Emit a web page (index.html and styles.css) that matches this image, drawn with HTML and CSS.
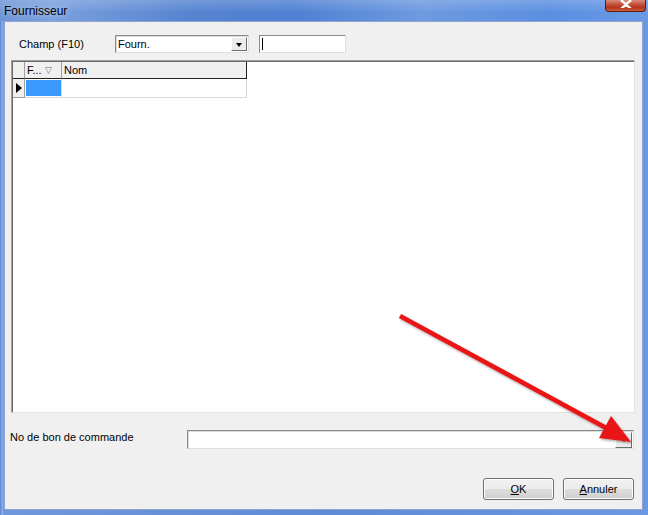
FILE: index.html
```html
<!DOCTYPE html>
<html>
<head>
<meta charset="utf-8">
<link rel="stylesheet" href="styles.css">
</head>
<body>
<div class="window">
  <div class="titlebar">
    <span class="title">Fournisseur</span>
    <span class="close"><svg width="14" height="8" viewBox="0 0 14 8"><path d="M2 0 L7 4.5 L12 0 M2 9 L7 4.5 L12 9" stroke="#fff" stroke-width="2.4" fill="none"/></svg></span>
  </div>
  <div class="client">
    <div class="toprow">
      <span class="lbl champ">Champ (F10)</span>
      <div class="combo">
        <span class="combo-text">Fourn.</span>
        <span class="dd"><i class="tri"></i></span>
      </div>
      <div class="field"><span class="caret"></span></div>
    </div>
    <div class="grid">
      <div class="ghead">
        <div class="gc sel"></div>
        <div class="gc c1">F... <span class="sort">&#9661;</span></div>
        <div class="gc c2">Nom</div>
      </div>
      <div class="grow">
        <div class="gc sel"><i class="rtri"></i></div>
        <div class="gc c1"><span class="hl"></span></div>
        <div class="gc c2"></div>
      </div>
    </div>
    <div class="bottomrow">
      <span class="lbl po">No de bon de commande</span>
      <div class="combo wide">
        <span class="combo-text"></span>
        <span class="dd"><i class="tri"></i></span>
      </div>
    </div>
    <div class="buttons">
      <button class="btn"><u>O</u>K</button>
      <button class="btn"><u>A</u>nnuler</button>
    </div>
  </div>
  <svg class="arrow" width="648" height="515" viewBox="0 0 648 515">
    <defs>
      <filter id="sh" x="-10%" y="-10%" width="120%" height="120%">
        <feDropShadow dx="1" dy="1.5" stdDeviation="1.2" flood-color="#000" flood-opacity="0.35"/>
      </filter>
    </defs>
    <g filter="url(#sh)">
      <line x1="400" y1="316" x2="608" y2="429" stroke="#e81212" stroke-width="4.5"/>
      <polygon points="631,442 599,438 611,416" fill="#e81212"/>
    </g>
  </svg>
</div>
</body>
</html>
```
FILE: styles.css
```css
html, body {
  margin: 0;
  padding: 0;
}
body {
  width: 648px;
  height: 515px;
  overflow: hidden;
  font-family: "Liberation Sans", Arial, sans-serif;
  font-size: 11px;
  color: #000;
}
.window {
  position: relative;
  width: 648px;
  height: 515px;
  box-sizing: border-box;
  display: flex;
  flex-direction: column;
  background: linear-gradient(to right, #4f7fd0 0px, #8fb0ea 2px, #6f97dc 4px, #5f8ad6 50%, #6a98e2 100%);
}
.titlebar {
  height: 21px;
  display: flex;
  justify-content: space-between;
  align-items: flex-start;
  background:
    linear-gradient(to bottom, rgba(255,255,255,0.18), rgba(255,255,255,0) 60%),
    linear-gradient(to right, #6c94d6 0%, #7aa0de 8%, #5583d0 30%, #4f80d2 45%, #6d9ae0 65%, #5b8fe0 85%, #6a9ae6 100%);
}
.title {
  font-family: "Liberation Sans", Arial, sans-serif;
  font-size: 12px;
  padding: 4px 0 0 4px;
  color: #000;
  text-shadow: 0 0 6px rgba(255,255,255,0.7);
}
.close {
  width: 41px;
  height: 12px;
  margin-right: 2px;
  box-sizing: border-box;
  border: 1px solid #5a1b12;
  border-top: none;
  border-radius: 0 0 4px 4px;
  background: linear-gradient(to bottom, #d98a7c 0%, #c5503c 40%, #b23418 70%, #d0603c 100%);
  display: flex;
  justify-content: center;
  align-items: flex-start;
}
.close svg {
  display: block;
}
.client {
  flex: 1;
  margin: 0 5px 5px 4px;
  background: #f0f0f0;
  border: 1px solid #8ea6cf;
  box-sizing: border-box;
  display: flex;
  flex-direction: column;
}
.toprow {
  display: flex;
  align-items: center;
  margin-top: 13px;
  padding-left: 14px;
  height: 18px;
}
.lbl {
  white-space: nowrap;
}
.champ {
  width: 96px;
  flex: none;
}
.combo {
  width: 134px;
  height: 18px;
  box-sizing: border-box;
  background: #fff;
  border-top: 1px solid #8a8a8a;
  border-left: 1px solid #8a8a8a;
  border-right: 1px solid #e0e0e0;
  border-bottom: 1px solid #e0e0e0;
  box-shadow: inset 1px 1px 0 #dcdcdc;
  display: flex;
  align-items: center;
  padding: 0 1px 0 2px;
}
.combo-text {
  flex: 1;
  font-size: 11px;
}
.dd {
  width: 16px;
  height: 14px;
  box-sizing: border-box;
  background: #ececec;
  border-top: 1px solid #fff;
  border-left: 1px solid #fff;
  border-right: 1px solid #6d6d6d;
  border-bottom: 1px solid #6d6d6d;
  display: flex;
  align-items: center;
  justify-content: center;
}
.tri {
  display: block;
  width: 0;
  height: 0;
  border-left: 3.5px solid transparent;
  border-right: 3.5px solid transparent;
  border-top: 4px solid #000;
  margin-top: 1px;
}
.field {
  width: 87px;
  height: 18px;
  box-sizing: border-box;
  margin-left: 10px;
  background: #fff;
  border-top: 1px solid #8a8a8a;
  border-left: 1px solid #8a8a8a;
  border-right: 1px solid #e0e0e0;
  border-bottom: 1px solid #e0e0e0;
  display: flex;
  align-items: center;
  padding-left: 2px;
}
.caret {
  width: 1px;
  height: 12px;
  background: #000;
}
.grid {
  margin: 7px 0 0 6px;
  width: 624px;
  height: 353px;
  box-sizing: border-box;
  background: #fff;
  border-top: 1px solid #a0a0a0;
  border-left: 1px solid #a0a0a0;
  border-right: 1px solid #e3e3e3;
  border-bottom: 1px solid #e3e3e3;
  box-shadow: inset 1px 1px 0 #696969;
  padding: 1px 0 0 1px;
}
.ghead, .grow {
  display: flex;
}
.ghead {
  height: 17px;
}
.grow {
  height: 19px;
}
.gc {
  box-sizing: border-box;
  display: flex;
  align-items: center;
}
.ghead .gc {
  background: #f0f0f0;
  border-right: 1px solid #a0a0a0;
  border-bottom: 1px solid #202020;
}
.ghead .c2 {
  border-right: 1px solid #202020;
}
.sel {
  width: 12px;
}
.c1 {
  width: 37px;
  padding-left: 2px;
}
.c2 {
  width: 185px;
  padding-left: 2px;
}
.sort {
  font-size: 9px;
  color: #707070;
  margin-left: 3px;
}
.grow .gc {
  border-right: 1px solid #d8d8d8;
  border-bottom: 1px solid #d8d8d8;
}
.grow .sel {
  background: #f0f0f0;
  border-right: 1px solid #a0a0a0;
  border-bottom: 1px solid #a0a0a0;
  padding-left: 3px;
}
.grow .c1 {
  padding: 1px 0 1px 1px;
  align-items: stretch;
}
.hl {
  flex: 1;
  background: #3a99ff;
}
.rtri {
  display: block;
  width: 0;
  height: 0;
  border-top: 5.5px solid transparent;
  border-bottom: 5.5px solid transparent;
  border-left: 6px solid #000;
}
.bottomrow {
  display: flex;
  align-items: flex-start;
  margin-top: 17px;
  padding-left: 5px;
  height: 19px;
}
.po {
  width: 177px;
  flex: none;
  padding-top: 1px;
}
.combo.wide {
  width: 447px;
  height: 19px;
  padding-right: 1px;
}
.combo.wide .dd {
  width: 17px;
  height: 16px;
}
.buttons {
  display: flex;
  justify-content: flex-end;
  gap: 9px;
  margin-top: 29px;
  padding-right: 8px;
}
.btn {
  width: 71px;
  height: 22px;
  box-sizing: border-box;
  border: 1px solid #707070;
  border-radius: 3px;
  background: linear-gradient(to bottom, #f2f2f2 0%, #ebebeb 50%, #dddddd 51%, #cfcfcf 100%);
  box-shadow: inset 0 0 0 1px #fcfcfc;
  font-family: "Liberation Sans", Arial, sans-serif;
  font-size: 11px;
  color: #000;
  padding: 0;
}
.arrow {
  position: absolute;
  left: 0;
  top: 0;
  pointer-events: none;
}
```
